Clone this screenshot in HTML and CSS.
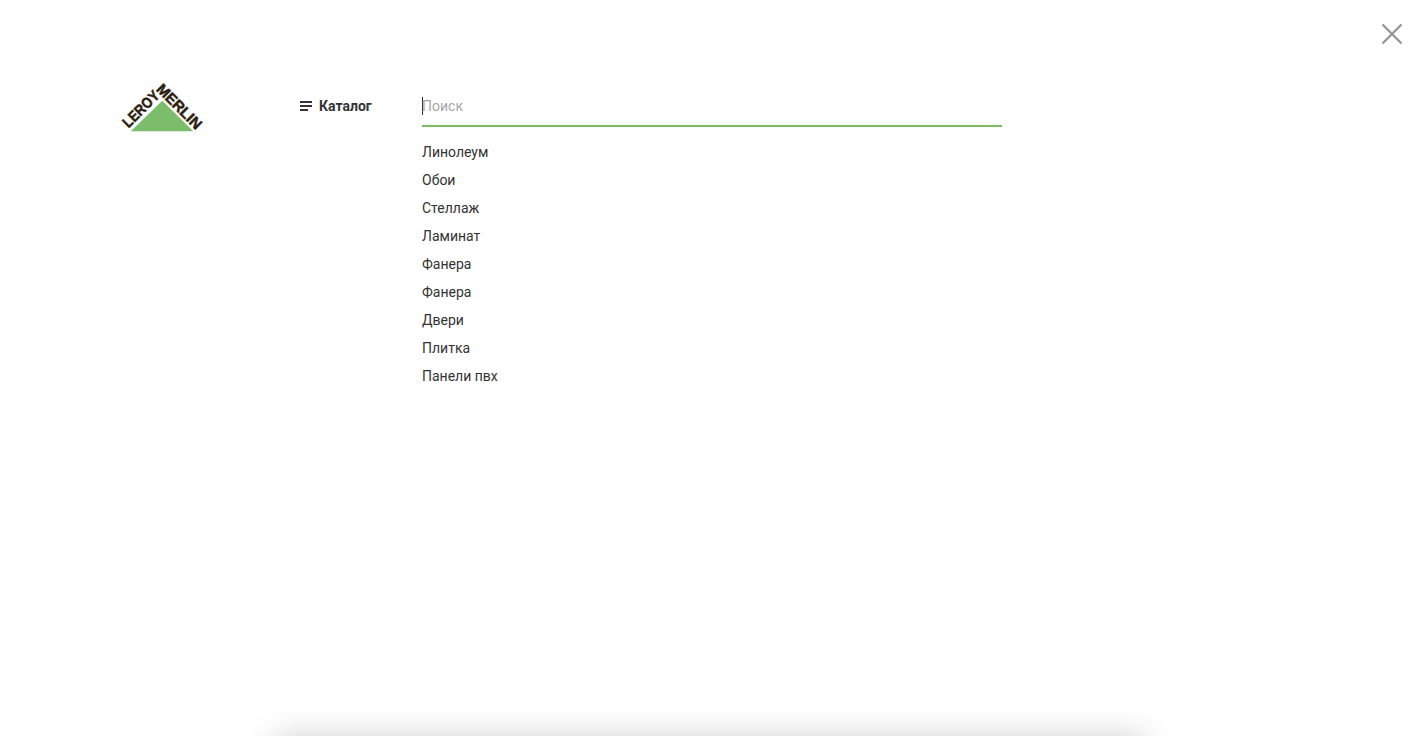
FILE: index.html
```html
<!DOCTYPE html>
<html lang="ru">
<head>
<meta charset="utf-8">
<title>Поиск</title>
<link rel="stylesheet" href="styles.css">
</head>
<body>
<div class="overlay">
  <button class="close" aria-label="Закрыть">
    <svg width="22" height="22" viewBox="0 0 22 22"><path d="M1.5 1.5 20.5 20.5M20.5 1.5 1.5 20.5" fill="none" stroke="#979797" stroke-width="2.4"/></svg>
  </button>
  <div class="layout">
    <a class="logo" aria-label="Leroy Merlin">
      <svg width="84" height="52" viewBox="0 0 84 52">
        <polygon points="42.3,19.7 10.7,50.3 73.3,50.3" fill="#7cbd6b"/>
        <text class="logo-text" transform="translate(8.5 47.5) rotate(-45)" textLength="45" lengthAdjust="spacingAndGlyphs">LEROY</text>
        <text class="logo-text" transform="translate(35.5 9) rotate(45)" textLength="57" lengthAdjust="spacingAndGlyphs">MERLIN</text>
      </svg>
    </a>
    <a class="catalog">
      <svg class="catalog-icon" width="14" height="10" viewBox="0 0 14 10"><path d="M1 1H13M1 5H13M1 9H9" fill="none" stroke="#333" stroke-width="2"/></svg>
      <span>Каталог</span>
    </a>
    <div class="search">
      <div class="field"><span class="caret"></span><span class="placeholder">Поиск</span></div>
      <ul class="suggestions">
        <li>Линолеум</li>
        <li>Обои</li>
        <li>Стеллаж</li>
        <li>Ламинат</li>
        <li>Фанера</li>
        <li>Фанера</li>
        <li>Двери</li>
        <li>Плитка</li>
        <li>Панели пвх</li>
      </ul>
    </div>
  </div>
  <div class="results-card"></div>
</div>
</body>
</html>
```
FILE: styles.css
```css
* { box-sizing: border-box; }
html, body { margin: 0; height: 100%; }
body {
  background: #fff;
  color: #333;
  font-family: Roboto, "Liberation Sans", sans-serif;
  font-size: 14px;
  overflow: hidden;
}
.overlay {
  position: relative;
  height: 736px;
  overflow: hidden;
  padding: 81px 0 0 120px;
}
.close {
  position: absolute;
  top: 23px;
  left: 1381px;
  width: 22px;
  height: 22px;
  padding: 0;
  border: 0;
  background: none;
}
.close svg { display: block; }
.layout {
  display: flex;
  align-items: flex-start;
}
.logo { display: block; width: 84px; height: 52px; flex: none; }
.logo svg { display: block; overflow: visible; }
.logo-text {
  font-family: "Liberation Sans", Arial, sans-serif;
  font-weight: 700;
  font-size: 15px;
  fill: #2a1d10;
  stroke: #2a1d10;
  stroke-width: 0.5px;
}
.catalog {
  display: flex;
  align-items: center;
  gap: 6px;
  margin: 17px 0 0 95px;
  width: 123px;
  height: 16px;
  font-weight: 700;
  line-height: 16px;
  color: #333;
}
.catalog-icon { flex: none; }
.search { width: 580px; }
.field {
  display: flex;
  align-items: center;
  height: 46px;
  padding-top: 14px;
  padding-bottom: 8px;
  border-bottom: 2px solid #7abb66;
  color: #a6a6a6;
  line-height: 18px;
}
.caret {
  width: 1px;
  height: 18px;
  margin-right: -1px;
  background: #333;
}
.suggestions {
  list-style: none;
  margin: 11px 0 0;
  padding: 0;
}
.suggestions li {
  height: 28px;
  line-height: 28px;
  color: #333;
}
.results-card {
  position: absolute;
  top: 736px;
  left: 275px;
  width: 870px;
  height: 300px;
  background: #fff;
  box-shadow: 0 0 30px rgba(0, 0, 0, 0.18);
}
```
